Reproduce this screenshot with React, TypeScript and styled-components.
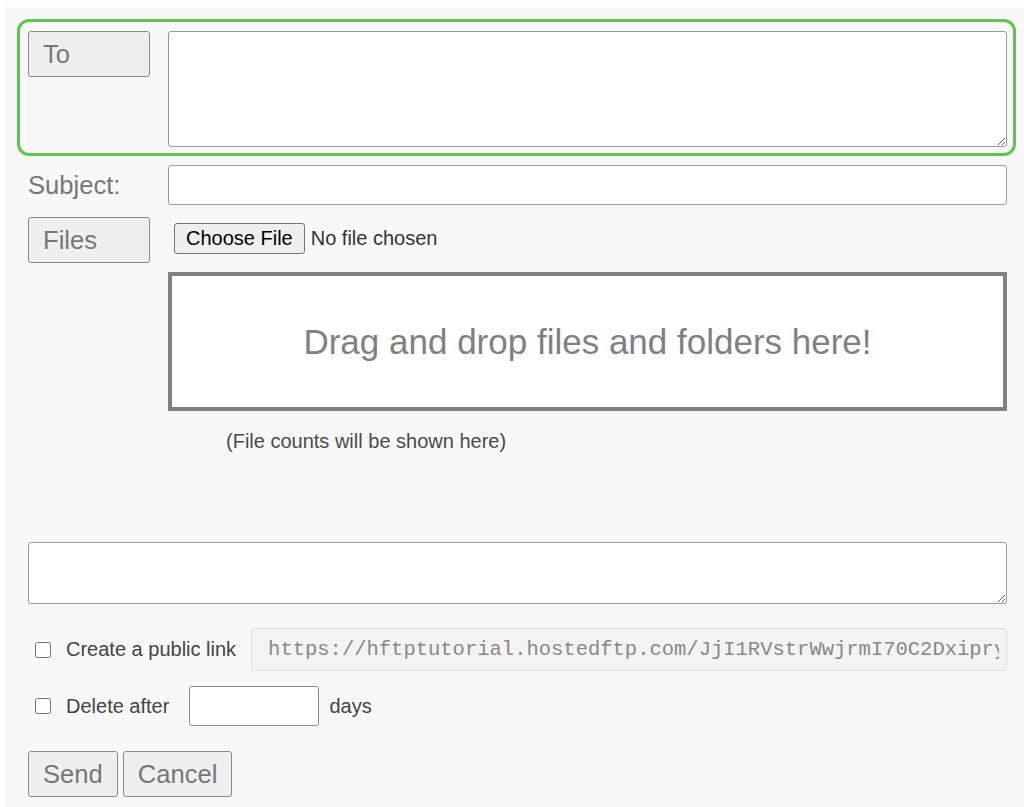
import React from 'react';
import styled, { createGlobalStyle } from 'styled-components';

const GlobalStyle = createGlobalStyle`
  html,
  body {
    margin: 0;
    padding: 0;
    background: #ffffff;
    font-family: 'Liberation Sans', Arial, sans-serif;
  }

  * {
    box-sizing: border-box;
  }
`;

const Panel = styled.form`
  margin: 7px 0 0 5px;
  min-height: 800px;
  padding: 12px 8px 10px 12px;
  background: #f8f8f8;
`;

const FieldRow = styled.div<{ $top?: number }>`
  display: grid;
  grid-template-columns: 122px 1fr;
  column-gap: 18px;
  align-items: start;
  margin-top: ${(p) => p.$top ?? 0}px;
  padding: 0 9px 0 11px;
`;

const Highlight = styled(FieldRow)`
  padding: 9px 6px 6px 8px;
  border: 3px solid #62c350;
  border-radius: 12px;
`;

const GreyButton = styled.button<{ $width?: number }>`
  height: 46px;
  width: ${(p) => (p.$width ? `${p.$width}px` : 'auto')};
  margin: 0;
  padding: 0 14px;
  text-align: left;
  font-family: inherit;
  font-size: 25.6px;
  line-height: 44px;
  color: #777777;
  background: #efefef;
  border: 1px solid #8a8a8a;
  border-radius: 3px;
`;

const Label = styled.label`
  display: block;
  font-size: 25.6px;
  line-height: 40px;
  color: #777777;
`;

const TextArea = styled.textarea<{ $height: number }>`
  display: block;
  width: 100%;
  height: ${(p) => p.$height}px;
  margin: 0;
  padding: 4px 6px;
  font-family: inherit;
  font-size: 18px;
  background: #ffffff;
  border: 1px solid #9a9a9a;
  border-radius: 3px;
`;

const TextInput = styled.input`
  display: block;
  width: 100%;
  height: 40px;
  margin: 0;
  padding: 0 8px;
  font-family: inherit;
  font-size: 20px;
  background: #ffffff;
  border: 1px solid #9a9a9a;
  border-radius: 3px;
`;

const FileColumn = styled.div`
  display: flex;
  flex-direction: column;
`;

const FilePicker = styled.input`
  margin: 6px 0 0 6px;
  height: 31px;
  font-family: inherit;
  font-size: 20px;
  color: #333333;

  &::file-selector-button {
    height: 31px;
    margin: 0 6px 0 0;
    padding: 0 11px;
    font-family: inherit;
    font-size: 20px;
    color: #000000;
    background: #efefef;
    border: 1px solid #767676;
    border-radius: 3px;
  }
`;

const DropZone = styled.div`
  display: flex;
  align-items: center;
  justify-content: center;
  height: 139px;
  margin-top: 18px;
  font-size: 35px;
  color: #808080;
  background: #ffffff;
  border: 4px solid #808080;
`;

const CountNote = styled.p`
  margin: 19px 0 0;
  padding-left: 58px;
  font-size: 20px;
  line-height: 23px;
  color: #4a4a4a;
`;

const Block = styled.div<{ $top: number }>`
  margin-top: ${(p) => p.$top}px;
  padding: 0 9px 0 11px;
`;

const OptionRow = styled.div<{ $top: number; $height: number }>`
  display: flex;
  align-items: center;
  height: ${(p) => p.$height}px;
  margin-top: ${(p) => p.$top}px;
  padding: 0 9px 0 18px;
  font-size: 20px;
  color: #444444;
`;

const Check = styled.input`
  width: 16px;
  height: 16px;
  margin: 0 15px 0 0;
  flex: none;
`;

const LinkField = styled.input`
  flex: 1;
  min-width: 0;
  height: 43px;
  margin-left: 15px;
  padding: 0 7px 0 16px;
  font-family: 'Liberation Mono', 'Courier New', monospace;
  font-size: 20.5px;
  color: #888888;
  background: #f3f3f3;
  border: 1px solid #dddddd;
  border-radius: 3px;
`;

const DaysField = styled.input`
  width: 130px;
  height: 40px;
  margin: 0 10px 0 20px;
  padding: 0 8px;
  font-family: inherit;
  font-size: 20px;
  background: #ffffff;
  border: 1px solid #8a8a8a;
  border-radius: 3px;
`;

const Actions = styled.div`
  display: flex;
  gap: 5px;
  margin-top: 25px;
  padding-left: 11px;
`;

export default function App() {
  return (
    <>
      <GlobalStyle />
      <Panel onSubmit={(e) => e.preventDefault()}>
        <Highlight>
          <GreyButton type="button" $width={122}>
            To
          </GreyButton>
          <TextArea $height={116} />
        </Highlight>

        <FieldRow $top={9}>
          <Label htmlFor="subject">Subject:</Label>
          <TextInput id="subject" type="text" />
        </FieldRow>

        <FieldRow $top={12}>
          <GreyButton type="button" $width={122}>
            Files
          </GreyButton>
          <FileColumn>
            <FilePicker type="file" />
            <DropZone>Drag and drop files and folders here!</DropZone>
            <CountNote>(File counts will be shown here)</CountNote>
          </FileColumn>
        </FieldRow>

        <Block $top={89}>
          <TextArea $height={62} />
        </Block>

        <OptionRow $top={24} $height={43}>
          <Check type="checkbox" id="public-link" />
          <label htmlFor="public-link">Create a public link</label>
          <LinkField
            type="text"
            readOnly
            value="https://hftptutorial.hostedftp.com/JjI1RVstrWwjrmI70C2Dxipry4kQ"
          />
        </OptionRow>

        <OptionRow $top={15} $height={40}>
          <Check type="checkbox" id="delete-after" />
          <label htmlFor="delete-after">Delete after</label>
          <DaysField type="text" />
          <span>days</span>
        </OptionRow>

        <Actions>
          <GreyButton type="submit">Send</GreyButton>
          <GreyButton type="button">Cancel</GreyButton>
        </Actions>
      </Panel>
    </>
  );
}
